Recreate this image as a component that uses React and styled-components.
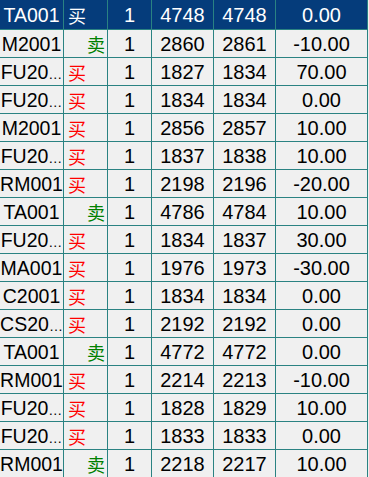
import React from "react";
import styled, { createGlobalStyle } from "styled-components";

const GlobalStyle = createGlobalStyle`
  html, body {
    margin: 0;
    padding: 0;
    background: #f0f0f0;
  }
  body {
    font-family: "Liberation Sans", "Noto Sans CJK SC", sans-serif;
  }
`;

const Table = styled.div`
  display: flex;
  flex-direction: column;
  gap: 1px;
  width: 367px;
  padding-right: 1px;
  background: #2a8282;
  overflow: hidden;
`;

const Row = styled.div`
  display: grid;
  grid-template-columns: 63px 43px 43px 61px 61px 91px;
  column-gap: 1px;
  height: ${(p) => (p.$first ? 29 : 27)}px;
`;

const Cell = styled.div`
  display: flex;
  align-items: center;
  justify-content: ${(p) =>
    p.$align === "left" ? "flex-start" : p.$align === "right" ? "flex-end" : "center"};
  padding: ${(p) =>
    p.$align === "left" ? "1px 0 0 4px" : p.$align === "right" ? "1px 2px 0 0" : "1px 0 0 0"};
  background: ${(p) => (p.$selected ? "#053c7b" : "#f0f0f0")};
  color: ${(p) => (p.$selected ? "#ffffff" : p.$color || "#000000")};
  font-family: "Liberation Sans", "Noto Sans CJK SC", sans-serif;
  font-size: ${(p) => (p.$code ? "19.5px" : "20px")};
  white-space: nowrap;
  overflow: hidden;
  box-sizing: border-box;
`;

const Side = styled.span`
  font-family: "Noto Sans CJK SC", sans-serif;
  font-size: 18px;
  line-height: 1;
`;

const Ellipsis = styled.span`
  font-size: 14px;
`;

const rows = [
  ["TA001", "买", 1, 4748, 4748, "0.00"],
  ["M2001", "卖", 1, 2860, 2861, "-10.00"],
  ["FU20…", "买", 1, 1827, 1834, "70.00"],
  ["FU20…", "买", 1, 1834, 1834, "0.00"],
  ["M2001", "买", 1, 2856, 2857, "10.00"],
  ["FU20…", "买", 1, 1837, 1838, "10.00"],
  ["RM001", "买", 1, 2198, 2196, "-20.00"],
  ["TA001", "卖", 1, 4786, 4784, "10.00"],
  ["FU20…", "买", 1, 1834, 1837, "30.00"],
  ["MA001", "买", 1, 1976, 1973, "-30.00"],
  ["C2001", "买", 1, 1834, 1834, "0.00"],
  ["CS20…", "买", 1, 2192, 2192, "0.00"],
  ["TA001", "卖", 1, 4772, 4772, "0.00"],
  ["RM001", "买", 1, 2214, 2213, "-10.00"],
  ["FU20…", "买", 1, 1828, 1829, "10.00"],
  ["FU20…", "买", 1, 1833, 1833, "0.00"],
  ["RM001", "卖", 1, 2218, 2217, "10.00"],
];

function Code({ text }) {
  if (text.endsWith("…")) {
    return (
      <span>
        {text.slice(0, -1)}
        <Ellipsis>…</Ellipsis>
      </span>
    );
  }
  return <span>{text}</span>;
}

export default function App() {
  return (
    <>
      <GlobalStyle />
      <Table>
        {rows.map((r, i) => {
          const sel = i === 0;
          const buy = r[1] === "买";
          return (
            <Row key={i} $first={i === 0}>
              <Cell $selected={sel} $code>
                <Code text={r[0]} />
              </Cell>
              <Cell
                $selected={sel}
                $align={buy ? "left" : "right"}
                $color={buy ? "#ff0000" : "#008000"}
              >
                <Side>{r[1]}</Side>
              </Cell>
              <Cell $selected={sel}>{r[2]}</Cell>
              <Cell $selected={sel}>{r[3]}</Cell>
              <Cell $selected={sel}>{r[4]}</Cell>
              <Cell $selected={sel}>{r[5]}</Cell>
            </Row>
          );
        })}
      </Table>
    </>
  );
}
